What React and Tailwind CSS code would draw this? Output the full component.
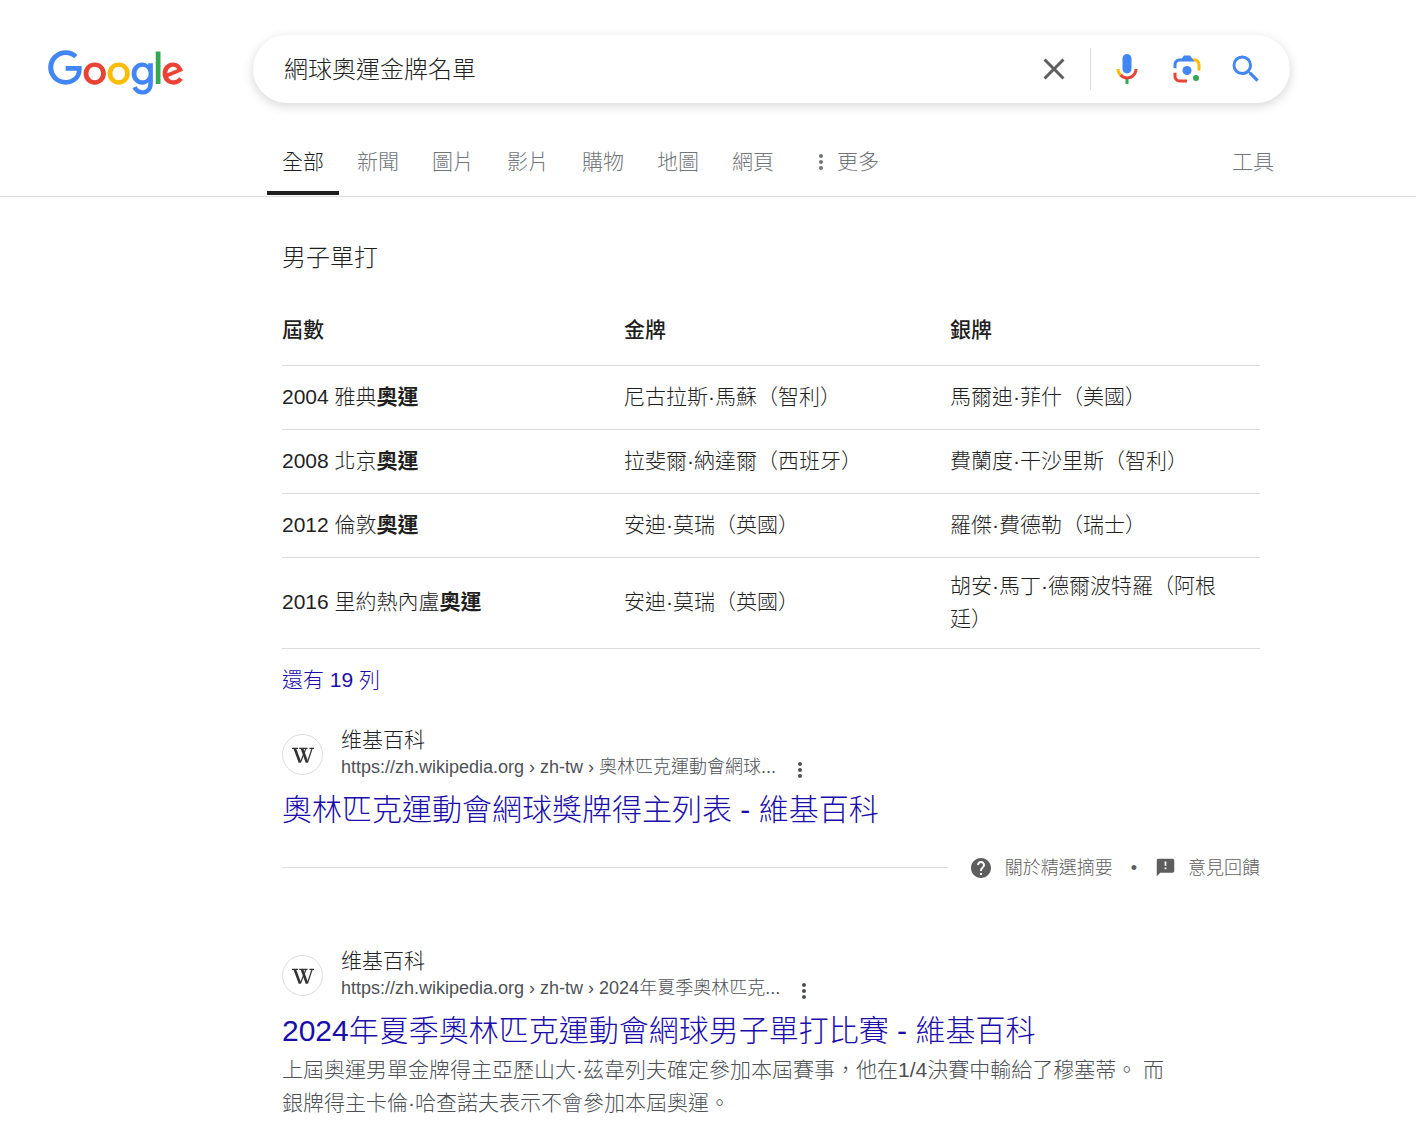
import React, { useState } from "react";

const tabs = ["全部", "新聞", "圖片", "影片", "購物", "地圖", "網頁"];

const rows = [
  { year: "2004", city: "雅典", gold: "尼古拉斯·馬蘇（智利）", silver: "馬爾迪·菲什（美國）" },
  { year: "2008", city: "北京", gold: "拉斐爾·納達爾（西班牙）", silver: "費蘭度·干沙里斯（智利）" },
  { year: "2012", city: "倫敦", gold: "安迪·莫瑞（英國）", silver: "羅傑·費德勒（瑞士）" },
  { year: "2016", city: "里約熱內盧", gold: "安迪·莫瑞（英國）", silver: "胡安·馬丁·德爾波特羅（阿根廷）" },
];

const GoogleLogo = () => (
  <svg viewBox="0 0 272 92" className="w-[136px] h-[46px]" role="img" aria-label="Google">
    <path fill="#EA4335" d="M115.75 47.18c0 12.77-9.99 22.18-22.25 22.18s-22.25-9.41-22.25-22.18C71.25 34.32 81.24 25 93.5 25s22.25 9.32 22.25 22.18zm-9.74 0c0-7.98-5.79-13.44-12.51-13.44S80.99 39.2 80.99 47.18c0 7.9 5.79 13.44 12.51 13.44s12.51-5.55 12.51-13.44z" />
    <path fill="#FBBC05" d="M163.75 47.18c0 12.77-9.99 22.18-22.25 22.18s-22.25-9.41-22.25-22.18c0-12.85 9.99-22.18 22.25-22.18s22.25 9.32 22.25 22.18zm-9.74 0c0-7.98-5.79-13.44-12.51-13.44s-12.51 5.46-12.51 13.44c0 7.9 5.79 13.44 12.51 13.44s12.51-5.55 12.51-13.44z" />
    <path fill="#4285F4" d="M209.75 26.34v39.82c0 16.38-9.66 23.07-21.08 23.07-10.75 0-17.22-7.19-19.66-13.07l8.48-3.53c1.51 3.61 5.21 7.87 11.17 7.87 7.31 0 11.84-4.51 11.84-13v-3.19h-.34c-2.18 2.69-6.38 5.04-11.68 5.04-11.09 0-21.25-9.66-21.25-22.09 0-12.52 10.16-22.26 21.25-22.26 5.29 0 9.49 2.35 11.68 4.96h.34v-3.61h9.25zm-8.56 20.92c0-7.81-5.21-13.52-11.84-13.52-6.72 0-12.35 5.71-12.35 13.52 0 7.73 5.63 13.36 12.35 13.36 6.63 0 11.84-5.63 11.84-13.36z" />
    <path fill="#34A853" d="M225 3v65h-9.5V3h9.5z" />
    <path fill="#EA4335" d="M262.02 54.48l7.56 5.04c-2.44 3.61-8.32 9.83-18.48 9.83-12.6 0-22.01-9.74-22.01-22.18 0-13.19 9.49-22.18 20.92-22.18 11.51 0 17.14 9.16 18.98 14.11l1.01 2.52-29.65 12.28c2.27 4.45 5.8 6.72 10.75 6.72 4.96 0 8.4-2.44 10.92-6.14zm-23.27-7.98l19.82-8.23c-1.09-2.77-4.37-4.7-8.23-4.7-4.95 0-11.84 4.37-11.59 12.93z" />
    <path fill="#4285F4" d="M35.29 41.41V32H67c.31 1.64.47 3.58.47 5.68 0 7.06-1.93 15.79-8.15 22.01-6.05 6.3-13.78 9.66-24.02 9.66C16.32 69.35.36 53.89.36 34.91.36 15.93 16.32.47 35.3.47c10.5 0 17.98 4.12 23.6 9.49l-6.64 6.64c-4.03-3.78-9.49-6.72-16.97-6.72-13.86 0-24.7 11.17-24.7 25.03 0 13.86 10.84 25.03 24.7 25.03 8.99 0 14.11-3.61 17.39-6.89 2.66-2.66 4.41-6.46 5.1-11.65l-22.49.01z" />
  </svg>
);

const WikipediaLogo = () => (
  <svg viewBox="0 0 24 24" className="size-6" fill="none" stroke="#333" strokeLinejoin="bevel">
    <path strokeWidth="2.6" d="M3.8 5.5L9 19.5M11 5.5L16 19.5" />
    <path strokeWidth="1.2" d="M9.4 19.5L14.8 5.7M16.4 19.5L21 5.7" />
    <path strokeWidth="1.2" d="M1 5.4h6M8.2 5.4h8.4M18.4 5.4H23" />
  </svg>
);

const CloseIcon = () => (
  <svg viewBox="0 0 24 24" className="size-9" fill="#5e5e5e">
    <path d="M19 6.41L17.59 5 12 10.59 6.41 5 5 6.41 10.59 12 5 17.59 6.41 19 12 13.41 17.59 19 19 17.59 13.41 12z" />
  </svg>
);

const MicIcon = () => (
  <svg viewBox="0 0 24 24" className="size-9">
    <path fill="#4285f4" d="m12 15c1.66 0 3-1.31 3-2.97v-7.02c0-1.66-1.34-3.01-3-3.01s-3 1.34-3 3.01v7.02c0 1.66 1.34 2.97 3 2.97z" />
    <path fill="#34a853" d="m11 18.08h2v3.92h-2z" />
    <path fill="#fbbc05" d="m7.05 16.87c-1.27-1.33-2.05-2.83-2.05-4.87h2c0 1.45 0.56 2.42 1.47 3.38v0.32l-1.15 1.18z" />
    <path fill="#ea4335" d="m12 16.93a4.97 5.25 0 0 1 -3.54 -1.55l-1.41 1.49c1.26 1.34 3.02 2.13 4.95 2.13 3.87 0 6.99-2.92 6.99-7h-1.99c0 2.92-2.24 4.93-5 4.93z" />
  </svg>
);

const LensIcon = () => (
  <svg viewBox="0 0 192 192" className="size-9">
    <circle fill="#34a853" cx="144.07" cy="144" r="16" />
    <circle fill="#4285f4" cx="96.07" cy="104" r="24" />
    <path fill="#ea4335" d="M24,135.2c0,18.11,14.69,32.8,32.8,32.8H96v-16l-40.1-0.1c-8.8,0-15.9-8.19-15.9-17.9v-18H24V135.2z" />
    <path fill="#fbbc04" d="M168,72.8c0-18.11-14.69-32.8-32.8-32.8H116l20,16c8.8,0,16,8.29,16,18v30h16V72.8z" />
    <path fill="#4285f4" d="M112,24l-32,0L68,40H56.8C38.69,40,24,54.69,24,72.8V92h16V74c0-9.71,7.2-18,16-18h80L124,40L112,24z" />
  </svg>
);

const SearchIcon = () => (
  <svg viewBox="0 0 24 24" className="size-9" fill="#4285f4">
    <path d="M15.5 14h-.79l-.28-.27A6.471 6.471 0 0 0 16 9.5 6.5 6.5 0 1 0 9.5 16c1.61 0 3.09-.59 4.23-1.57l.27.28v.79l5 4.99L20.49 19l-4.99-5zm-6 0C7.01 14 5 11.99 5 9.5S7.01 5 9.5 5 14 7.01 14 9.5 11.99 14 9.5 14z" />
  </svg>
);

const DotsIcon = () => (
  <svg viewBox="0 0 24 24" className="size-6 shrink-0" fill="currentColor">
    <path d="M12 8c1.1 0 2-.9 2-2s-.9-2-2-2-2 .9-2 2 .9 2 2 2zm0 2c-1.1 0-2 .9-2 2s.9 2 2 2 2-.9 2-2-.9-2-2-2zm0 6c-1.1 0-2 .9-2 2s.9 2 2 2 2-.9 2-2-.9-2-2-2z" />
  </svg>
);

const HelpIcon = () => (
  <svg viewBox="0 0 24 24" className="size-6" fill="#5e5e5e">
    <path d="M12 2C6.48 2 2 6.48 2 12s4.48 10 10 10 10-4.48 10-10S17.52 2 12 2zm1 17h-2v-2h2v2zm2.07-7.75l-.9.92C13.45 12.9 13 13.5 13 15h-2v-.5c0-1.1.45-2.1 1.17-2.83l1.24-1.26c.37-.36.59-.86.59-1.41 0-1.1-.9-2-2-2s-2 .9-2 2H8c0-2.21 1.79-4 4-4s4 1.79 4 4c0 .88-.36 1.68-.93 2.25z" />
  </svg>
);

const FeedbackIcon = () => (
  <svg viewBox="0 0 24 24" className="size-[21px]" fill="#5e5e5e">
    <path d="M20 2H4c-1.1 0-1.99.9-1.99 2L2 22l4-4h14c1.1 0 2-.9 2-2V4c0-1.1-.9-2-2-2zm-7 12h-2v-2h2v2zm0-4h-2V5h2v5z" />
  </svg>
);

const ResultHeader = ({ site, url, title }) => (
  <div>
    <div className="flex items-center">
      <span className="flex items-center justify-center size-[41px] mr-[18px] rounded-full border border-[#dadce0]">
        <WikipediaLogo />
      </span>
      <div className="pb-0.5">
        <div className="text-[21px] leading-7 text-[#202124]">{site}</div>
        <div className="flex h-7 text-lg leading-[26px] text-[#4d5156]">
          <cite className="not-italic">{url}</cite>
          <button type="button" aria-label="關於這項結果" className="ml-3 pt-1 cursor-pointer">
            <DotsIcon />
          </button>
        </div>
      </div>
    </div>
    <h3 className="mt-1.5 text-3xl leading-10 text-[#1a0dab]">
      <a href="#" className="hover:underline">{title}</a>
    </h3>
  </div>
);

const App = () => {
  const [query, setQuery] = useState("網球奧運金牌名單");
  const [active, setActive] = useState("全部");

  return (
    <div className="bg-white text-[#1f1f1f] font-light font-['Liberation_Sans','Noto_Sans_CJK_TC',sans-serif]">
      <header className="border-b border-[#dadce0]">
        {/* Logo & search box */}
        <div className="flex items-start pt-[35px] pl-12 pr-[126px]">
          <a href="#" className="mt-[15px] mr-[69px] shrink-0">
            <GoogleLogo />
          </a>
          <form
            role="search"
            onSubmit={(e) => e.preventDefault()}
            className="flex flex-1 items-center h-[68px] pl-[31px] pr-[26px] rounded-full shadow-[0_3px_10px_1px_rgba(64,60,67,0.18)]"
          >
            <input
              type="text"
              aria-label="搜尋"
              value={query}
              onChange={(e) => setQuery(e.target.value)}
              className="flex-1 min-w-0 h-12 pb-1 text-2xl outline-none bg-transparent"
            />
            <button type="button" aria-label="清除" onClick={() => setQuery("")} className="cursor-pointer">
              <CloseIcon />
            </button>
            <span className="h-[42px] ml-[18px] mr-[18px] border-l border-[#dadce0]" />
            <button type="button" aria-label="語音搜尋" className="mr-6 cursor-pointer">
              <MicIcon />
            </button>
            <button type="button" aria-label="以圖搜尋" className="mr-[23px] cursor-pointer">
              <LensIcon />
            </button>
            <button type="submit" aria-label="Google 搜尋" className="cursor-pointer">
              <SearchIcon />
            </button>
          </form>
        </div>

        {/* Result type tabs */}
        <nav className="flex items-center mt-[26px] pl-[267px] pr-[142px] pb-px text-[21px] text-[#70757a]">
          <div className="flex gap-[3px]">
            {tabs.map((tab) => (
              <a
                key={tab}
                href="#"
                onClick={() => setActive(tab)}
                className={`h-[66px] px-[15px] leading-[66px] border-b-4 box-border ${
                  active === tab ? "text-[#1f1f1f] border-[#1f1f1f]" : "border-transparent"
                }`}
              >
                {tab}
              </a>
            ))}
          </div>
          <button type="button" className="flex items-center ml-5 gap-1 cursor-pointer">
            <DotsIcon />
            更多
          </button>
          <button type="button" className="ml-auto cursor-pointer">
            工具
          </button>
        </nav>
      </header>

      <main className="pl-[282px] pr-[156px] pt-[45px]">
        {/* Featured snippet */}
        <section>
          <h2 className="text-2xl leading-8">男子單打</h2>
          <table className="w-full mt-[27px] table-fixed text-left text-[21px] leading-[33px]">
            <colgroup>
              <col className="w-[342px]" />
              <col className="w-[326px]" />
              <col />
            </colgroup>
            <thead>
              <tr className="h-16 border-b border-[#dadce0]">
                <th className="pb-1.5 font-medium">屆數</th>
                <th className="pb-1.5 font-medium">金牌</th>
                <th className="pb-1.5 font-medium">銀牌</th>
              </tr>
            </thead>
            <tbody>
              {rows.map((row) => (
                <tr key={row.year} className="h-16 border-b border-[#dadce0]">
                  <td className="pt-[11px] pb-[13px]">
                    {row.year} {row.city}
                    <b className="font-bold">奧運</b>
                  </td>
                  <td className="pt-[11px] pb-[13px]">{row.gold}</td>
                  <td className="pt-[11px] pb-[13px] pr-6">{row.silver}</td>
                </tr>
              ))}
            </tbody>
          </table>
          <a href="#" className="block mt-[15px] mb-[30px] text-[21px] leading-8 text-[#1a0dab]">
            還有 19 列
          </a>
          <ResultHeader
            site="维基百科"
            url="https://zh.wikipedia.org › zh-tw › 奧林匹克運動會網球..."
            title="奧林匹克運動會網球獎牌得主列表 - 維基百科"
          />
          <div className="flex items-center mt-6 text-lg leading-7 text-[#5e5e5e]">
            <hr className="flex-1 mr-[21px] border-[#dadce0]" />
            <a href="#" className="flex items-center gap-3">
              <HelpIcon />
              關於精選摘要
            </a>
            <span className="mx-[18px]">•</span>
            <a href="#" className="flex items-center gap-3">
              <FeedbackIcon />
              意見回饋
            </a>
          </div>
        </section>

        {/* Organic result */}
        <article className="mt-[65px]">
          <ResultHeader
            site="维基百科"
            url="https://zh.wikipedia.org › zh-tw › 2024年夏季奧林匹克..."
            title="2024年夏季奧林匹克運動會網球男子單打比賽 - 維基百科"
          />
          <p className="max-w-[900px] mt-0.5 text-[21px] leading-[33px] text-[#4d5156]">
            上屆奧運男單金牌得主亞歷山大·茲韋列夫確定參加本屆賽事，他在1/4決賽中輸給了穆塞蒂。 而銀牌得主卡倫·哈查諾夫表示不會參加本屆奧運。
          </p>
        </article>
      </main>
    </div>
  );
};

export default App;
